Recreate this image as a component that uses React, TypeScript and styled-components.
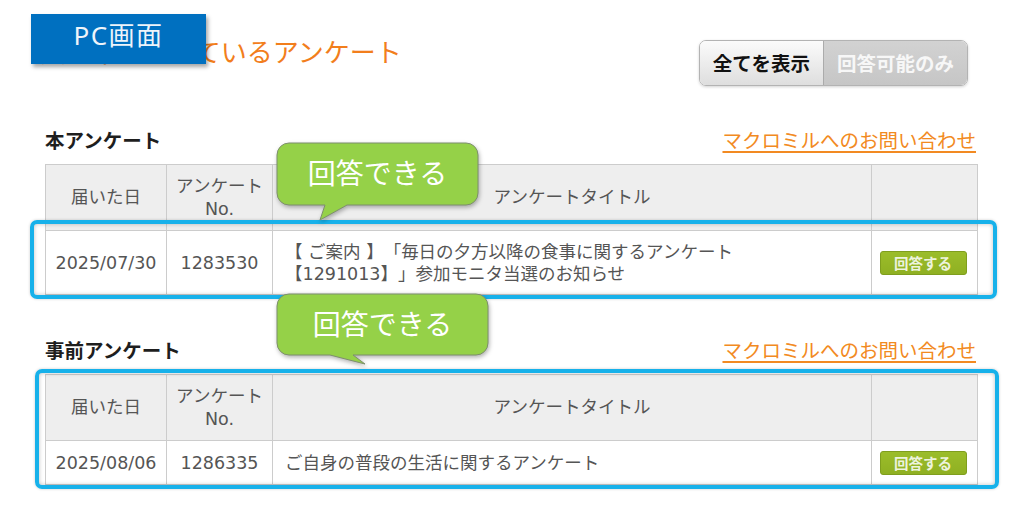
import React from "react";
import styled, { createGlobalStyle } from "styled-components";

const Global = createGlobalStyle`
  html, body { margin: 0; padding: 0; background: #fff; }
  body { font-family: "DejaVu Sans", "Noto Sans CJK JP", sans-serif; }
`;

const Page = styled.div`
  position: relative;
  width: 1024px;
  height: 530px;
  overflow: hidden;
  box-sizing: border-box;
  padding: 40px 47px 0 45px;
  background: #fff;
`;

const Header = styled.header`
  display: flex;
  justify-content: space-between;
  align-items: flex-start;
`;

const Title = styled.h1`
  margin: -4px 0 0 -5px;
  font: 400 26px/30px "Noto Sans CJK JP", sans-serif;
  color: #f27e1c;
`;

const Toggle = styled.div`
  display: flex;
  margin-right: 9px;
  border: 1px solid #b3b3b3;
  border-radius: 7px;
  overflow: hidden;
  box-shadow: 0 1px 3px rgba(0, 0, 0, 0.18);
`;

const ToggleSeg = styled.div<{ $active?: boolean }>`
  padding: 10px 13px;
  font: 700 19.5px/24px "Noto Sans CJK JP", sans-serif;
  color: ${(p) => (p.$active ? "#111" : "#f7f7f7")};
  background: ${(p) =>
    p.$active
      ? "linear-gradient(#fbfbfb, #dedede)"
      : "linear-gradient(#d2d2d2, #c6c6c6)"};
  & + & {
    border-left: 1px solid #ababab;
  }
`;

const Section = styled.section<{ $gap: number }>`
  margin-top: ${(p) => p.$gap}px;
`;

const SectionHead = styled.div`
  display: flex;
  justify-content: space-between;
  align-items: center;
  height: 24px;
  margin-bottom: 12px;
`;

const Heading = styled.h2`
  margin: 0;
  font: 700 19.5px/24px "Noto Sans CJK JP", sans-serif;
  color: #1e1e1e;
`;

const InquiryLink = styled.a`
  margin-right: 1px;
  font: 400 19.5px/24px "Noto Sans CJK JP", sans-serif;
  color: #f28a22;
  text-decoration: underline;
  text-decoration-thickness: 2px;
  text-underline-offset: 3px;
`;

const TableWrap = styled.div`
  position: relative;
`;

const Table = styled.table`
  width: 100%;
  border-collapse: collapse;
  table-layout: fixed;
  border: 1px solid #c8c8c8;
`;

const Th = styled.th`
  background: #eeeeee;
  border: 1px solid #cccccc;
  padding: 9.5px 6px;
  font: 400 17.5px/23px "DejaVu Sans", "Noto Sans CJK JP", sans-serif;
  color: #555;
  text-align: center;
  vertical-align: middle;
`;

const Td = styled.td<{ $align?: string }>`
  border: 1px solid #cccccc;
  padding: 9.5px ${(p) => (p.$align === "left" ? "12px" : "6px")};
  font: 400 17.5px/22px "DejaVu Sans", "Noto Sans CJK JP", sans-serif;
  color: #555;
  text-align: ${(p) => p.$align || "center"};
  vertical-align: middle;
  text-spacing-trim: space-all;
`;

const AnswerButton = styled.span`
  display: inline-block;
  box-sizing: border-box;
  width: 87px;
  height: 24px;
  margin-right: 3px;
  border: 1px solid #7f9e1e;
  border-radius: 3px;
  background: linear-gradient(#9bbd2a, #8fb022);
  color: #edf3dc;
  font: 700 14.5px/22px "Noto Sans CJK JP", sans-serif;
  text-align: center;
  vertical-align: middle;
`;

const Badge = styled.div`
  position: absolute;
  left: 31px;
  top: 14px;
  width: 175px;
  height: 50px;
  box-sizing: border-box;
  padding-bottom: 8px;
  display: flex;
  align-items: center;
  justify-content: center;
  background: #0070c0;
  color: #eef4fa;
  font: 400 26px/30px "Noto Sans", "Noto Sans CJK JP", sans-serif;
  letter-spacing: 1.5px;
  box-shadow: 2px 3px 4px rgba(0, 0, 0, 0.35);
`;

const Highlight = styled.div<{ $l: number; $t: number; $w: number; $h: number }>`
  position: absolute;
  left: ${(p) => p.$l}px;
  top: ${(p) => p.$t}px;
  width: ${(p) => p.$w}px;
  height: ${(p) => p.$h}px;
  box-sizing: border-box;
  border: 4px solid #17b1ea;
  border-radius: 7px;
  box-shadow: inset 0 0 4px rgba(0, 0, 0, 0.25), 0 0 3px rgba(0, 0, 0, 0.2);
  pointer-events: none;
`;

const BubbleBox = styled.div<{ $l: number; $t: number; $w: number; $h: number }>`
  position: absolute;
  left: ${(p) => p.$l}px;
  top: ${(p) => p.$t}px;
  width: ${(p) => p.$w}px;
  height: ${(p) => p.$h}px;
  pointer-events: none;
  svg {
    position: absolute;
    inset: 0;
    overflow: visible;
    filter: drop-shadow(1px 2px 2px rgba(0, 0, 0, 0.3));
  }
`;

const BubbleText = styled.div<{ $bodyH: number }>`
  position: relative;
  height: ${(p) => p.$bodyH}px;
  display: flex;
  align-items: center;
  justify-content: center;
  padding-bottom: 2px;
  box-sizing: border-box;
  color: #fff;
  font: 400 28px/34px "Noto Sans CJK JP", sans-serif;
`;

type BubbleProps = {
  l: number;
  t: number;
  w: number;
  h: number;
  bodyH: number;
  path: string;
};

const Bubble = ({ l, t, w, h, bodyH, path }: BubbleProps) => (
  <BubbleBox $l={l} $t={t} $w={w} $h={h}>
    <svg width={w} height={h} viewBox={`0 0 ${w} ${h}`}>
      <path d={path} fill="#95d148" stroke="#7d8f6c" strokeWidth="1" />
    </svg>
    <BubbleText $bodyH={bodyH}>回答できる</BubbleText>
  </BubbleBox>
);

const Cols = () => (
  <colgroup>
    <col style={{ width: 121 }} />
    <col style={{ width: 106 }} />
    <col style={{ width: 599 }} />
    <col style={{ width: 106 }} />
  </colgroup>
);

const HeadRow = () => (
  <thead>
    <tr>
      <Th>届いた日</Th>
      <Th>
        アンケート
        <br />
        No.
      </Th>
      <Th>アンケートタイトル</Th>
      <Th />
    </tr>
  </thead>
);

const bubble1 =
  "M14,2 H191 A12,12 0 0 1 203,14 V52 A12,12 0 0 1 191,64 H72 L45,79 L50,64 H14 A12,12 0 0 1 2,52 V14 A12,12 0 0 1 14,2 Z";
const bubble2 =
  "M14,2 H201 A12,12 0 0 1 213,14 V51 A12,12 0 0 1 201,63 H78 L90,72 L55,63 H14 A12,12 0 0 1 2,51 V14 A12,12 0 0 1 14,2 Z";

export default function App() {
  return (
    <>
      <Global />
      <Page>
        <Header>
          <Title>受付中になっているアンケート</Title>
          <Toggle>
            <ToggleSeg $active>全てを表示</ToggleSeg>
            <ToggleSeg>回答可能のみ</ToggleSeg>
          </Toggle>
        </Header>

        <Section $gap={42}>
          <SectionHead>
            <Heading>本アンケート</Heading>
            <InquiryLink href="#">マクロミルへのお問い合わせ</InquiryLink>
          </SectionHead>
          <TableWrap>
            <Table>
              <Cols />
              <HeadRow />
              <tbody>
                <tr>
                  <Td>2025/07/30</Td>
                  <Td>1283530</Td>
                  <Td $align="left">
                    【 ご案内 】「毎日の夕方以降の食事に関するアンケート
                    <br />
                    【1291013】」参加モニタ当選のお知らせ
                  </Td>
                  <Td>
                    <AnswerButton>回答する</AnswerButton>
                  </Td>
                </tr>
              </tbody>
            </Table>
            <Highlight $l={-15} $t={56} $w={967} $h={79} />
            <Bubble l={230} t={-23} w={205} h={81} bodyH={64} path={bubble1} />
          </TableWrap>
        </Section>

        <Section $gap={43}>
          <SectionHead>
            <Heading>事前アンケート</Heading>
            <InquiryLink href="#">マクロミルへのお問い合わせ</InquiryLink>
          </SectionHead>
          <TableWrap>
            <Table>
              <Cols />
              <HeadRow />
              <tbody>
                <tr>
                  <Td>2025/08/06</Td>
                  <Td>1286335</Td>
                  <Td $align="left">ご自身の普段の生活に関するアンケート</Td>
                  <Td>
                    <AnswerButton>回答する</AnswerButton>
                  </Td>
                </tr>
              </tbody>
            </Table>
            <Highlight $l={-10} $t={-5} $w={964} $h={120} />
            <Bubble l={230} t={-82} w={215} h={74} bodyH={63} path={bubble2} />
          </TableWrap>
        </Section>

        <Badge>PC画面</Badge>
      </Page>
    </>
  );
}
